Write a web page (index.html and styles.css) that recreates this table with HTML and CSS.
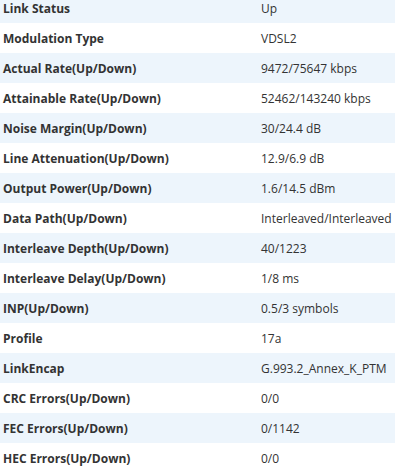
FILE: index.html
```html
<!DOCTYPE html>
<html>
<head>
<meta charset="utf-8">
<title>DSL Status</title>
<link rel="stylesheet" href="styles.css">
</head>
<body>
<table class="dsl-info">
  <tr><td class="name">Link Status</td><td class="value">Up</td></tr>
  <tr><td class="name">Modulation Type</td><td class="value">VDSL2</td></tr>
  <tr><td class="name">Actual Rate(Up/Down)</td><td class="value">9472/75647 kbps</td></tr>
  <tr><td class="name">Attainable Rate(Up/Down)</td><td class="value">52462/143240 kbps</td></tr>
  <tr><td class="name">Noise Margin(Up/Down)</td><td class="value">30/24.4 dB</td></tr>
  <tr><td class="name">Line Attenuation(Up/Down)</td><td class="value">12.9/6.9 dB</td></tr>
  <tr><td class="name">Output Power(Up/Down)</td><td class="value">1.6/14.5 dBm</td></tr>
  <tr><td class="name">Data Path(Up/Down)</td><td class="value">Interleaved/Interleaved</td></tr>
  <tr><td class="name">Interleave Depth(Up/Down)</td><td class="value">40/1223</td></tr>
  <tr><td class="name">Interleave Delay(Up/Down)</td><td class="value">1/8 ms</td></tr>
  <tr><td class="name">INP(Up/Down)</td><td class="value">0.5/3 symbols</td></tr>
  <tr><td class="name">Profile</td><td class="value">17a</td></tr>
  <tr><td class="name">LinkEncap</td><td class="value">G.993.2_Annex_K_PTM</td></tr>
  <tr><td class="name">CRC Errors(Up/Down)</td><td class="value">0/0</td></tr>
  <tr><td class="name">FEC Errors(Up/Down)</td><td class="value">0/1142</td></tr>
  <tr><td class="name">HEC Errors(Up/Down)</td><td class="value">0/0</td></tr>
</table>
</body>
</html>
```

FILE: styles.css
```css
body{
    margin:0;
    background-color:white;
    overflow:hidden;
}

.dsl-info{
    border-collapse:collapse;
    width:395px;
    margin-top:-7px;
    font-family:"Open Sans", "Noto Sans", sans-serif;
    font-size:12px;
    color:#333;
}

.dsl-info tr{
    height:30px;
}

.dsl-info tr:nth-child(odd){
    background-color:#edf5fc;
}

.dsl-info td{
    padding:0;
    white-space:nowrap;
}

.dsl-info .name{
    width:258px;
    padding-left:3px;
    font-weight:bold;
}
```
